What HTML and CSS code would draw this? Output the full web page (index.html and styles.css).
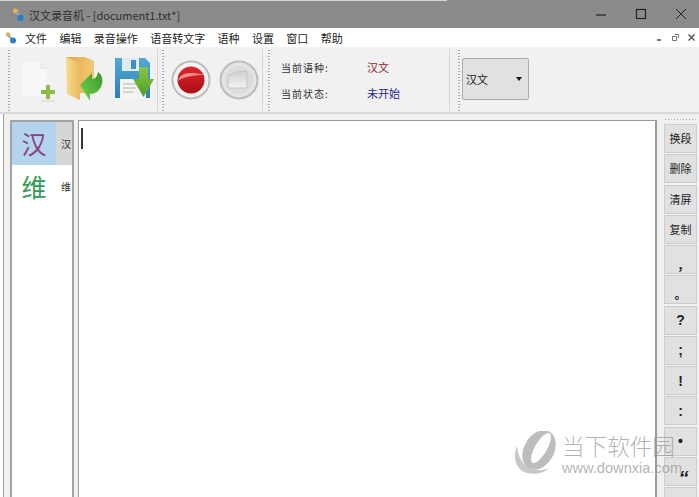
FILE: index.html
```html
<!DOCTYPE html>
<html lang="zh">
<head>
<meta charset="utf-8">
<title>汉文录音机</title>
<link rel="stylesheet" href="styles.css">
</head>
<body>
<div class="app">
  <header class="titlebar">
    <svg class="app-icon" width="13" height="14" viewBox="0 0 13 14"><circle cx="3.5" cy="3" r="2.5" fill="#e8b35a"/><path d="M4 4l5 5" stroke="#9aa7b5" stroke-width="2"/><circle cx="8.5" cy="10" r="3.2" fill="#2f7fc4"/></svg>
    <span class="title-text">汉文录音机 - [document1.txt*]</span>
    <div class="win-controls">
      <svg width="12" height="12" viewBox="0 0 12 12"><path d="M1 7h10" stroke="#222" stroke-width="1.2"/></svg>
      <svg width="12" height="12" viewBox="0 0 12 12"><rect x="1.5" y="1.5" width="9" height="9" fill="none" stroke="#222" stroke-width="1.2"/></svg>
      <svg width="12" height="12" viewBox="0 0 12 12"><path d="M1 1l10 10M11 1L1 11" stroke="#222" stroke-width="1"/></svg>
    </div>
  </header>

  <nav class="menubar">
    <svg class="menu-icon" width="13" height="14" viewBox="0 0 13 14"><circle cx="3" cy="3.5" r="2.3" fill="#e8b35a"/><path d="M3 4l5 5" stroke="#9aa7b5" stroke-width="2"/><circle cx="8" cy="9.5" r="3" fill="#2f7fc4"/></svg>
    <ul class="menu-list">
      <li>文件</li><li>编辑</li><li>录音操作</li><li>语音转文字</li><li>语种</li><li>设置</li><li>窗口</li><li>帮助</li>
    </ul>
    <div class="mdi-controls">
      <svg width="9" height="9" viewBox="0 0 9 9"><path d="M2 7h4" stroke="#555" stroke-width="1.6"/></svg>
      <svg width="9" height="9" viewBox="0 0 9 9"><path d="M3.5 1.5h4v3.5M1.500 3.5h4v4h-4z" fill="none" stroke="#777"/></svg>
      <svg width="9" height="9" viewBox="0 0 9 9"><path d="M1.5 1.5l6 6M7.5 1.5l-6 6" stroke="#555" stroke-width="1.4"/></svg>
    </div>
  </nav>

  <section class="toolbar">
    <div class="tool-group group-file">
      <svg class="tool-icon" width="36" height="44" viewBox="0 0 36 44">
        <path d="M1 4h17l7 7v27H1z" fill="#f8f8f8"/>
        <path d="M18 4l7 7h-7z" fill="#ececec"/>
        <path d="M26 27v14M19 34h14" stroke="#8dbb45" stroke-width="4"/>
        <path d="M19 43h14" stroke="#d8d8d8"/>
      </svg>
      <svg class="tool-icon" width="37" height="43" viewBox="0 0 37 43">
        <defs>
          <linearGradient id="fo" x1="0" y1="0" x2="1" y2="0"><stop offset="0" stop-color="#f7dc8e"/><stop offset="1" stop-color="#e9b95a"/></linearGradient>
          <linearGradient id="fb" x1="0" y1="0" x2="1" y2="0"><stop offset="0" stop-color="#e2a54a"/><stop offset="1" stop-color="#f3c976"/></linearGradient>
          <linearGradient id="ar" x1="0" y1="1" x2="1" y2="0"><stop offset="0" stop-color="#7fd24e"/><stop offset="1" stop-color="#2f9a2a"/></linearGradient>
        </defs>
        <path d="M0 0h19l9 4v32H12z" fill="url(#fb)"/>
        <path d="M0 0l14 6v37L1 37z" fill="url(#fo)"/>
        <path d="M14 28L26 16v6c3 0 5-2 6-7 4 3 5 7 4 12-2 7-7 10-12 10v7z" fill="url(#ar)"/>
      </svg>
      <svg class="tool-icon" width="40" height="41" viewBox="0 0 40 41">
        <defs>
          <linearGradient id="sv" x1="0" y1="0" x2="0" y2="1"><stop offset="0" stop-color="#55a6d8"/><stop offset="1" stop-color="#2d7fb8"/></linearGradient>
          <linearGradient id="sa" x1="0" y1="0" x2="0" y2="1"><stop offset="0" stop-color="#8cc63f"/><stop offset="1" stop-color="#4a9e25"/></linearGradient>
        </defs>
        <path d="M1 0h30l5 5v35H1z" fill="url(#sv)"/>
        <rect x="8" y="0" width="17" height="13" fill="#dfeaf2"/>
        <rect x="17" y="2" width="5" height="9" fill="#3f8fc4"/>
        <rect x="6" y="21" width="26" height="19" fill="#f4f4f4"/>
        <path d="M9 26h14M9 30h13M9 34h11" stroke="#b0b0b0"/>
        <path d="M25 9h9v12h6L29.500 39 19 21h6z" fill="url(#sa)"/>
      </svg>
    </div>
    <div class="tool-group group-record">
      <svg class="tool-icon" width="40" height="40" viewBox="0 0 40 40">
        <defs>
          <linearGradient id="rec" x1="0" y1="0" x2="0" y2="1"><stop offset="0" stop-color="#e0252b"/><stop offset="1" stop-color="#a80f16"/></linearGradient>
          <linearGradient id="stp" x1="0" y1="0" x2="0" y2="1"><stop offset="0" stop-color="#cfcfcf"/><stop offset="1" stop-color="#f2f2f2"/></linearGradient>
        </defs>
        <circle cx="20" cy="20" r="18.500" fill="#f4f4f4" stroke="#bcbcbc" stroke-width="2"/>
        <circle cx="20" cy="20" r="13.500" fill="url(#rec)"/>
        <path d="M6.800 21C9 13 18 11 33 15c-8 0-19 1-26.200 6z" fill="#f28a8a"/>
      </svg>
      <svg class="tool-icon" width="40" height="40" viewBox="0 0 40 40">
        <circle cx="20" cy="20" r="18.500" fill="#e4e4e4" stroke="#bcbcbc" stroke-width="2"/>
        <circle cx="20" cy="20" r="14" fill="#dcdcdc"/>
        <path d="M9 16c4-3 12-5 19-5v17H9z" fill="url(#stp)" stroke="#c4c4c4"/>
      </svg>
    </div>
    <div class="tool-group group-status">
      <div class="status-row"><span class="status-label">当前语种:</span><span class="status-value lang">汉文</span></div>
      <div class="status-row"><span class="status-label">当前状态:</span><span class="status-value state">未开始</span></div>
    </div>
    <div class="tool-group group-combo">
      <div class="combo"><span>汉文</span><i class="caret"></i></div>
    </div>
  </section>

  <main class="workspace">
    <aside class="langs">
      <div class="lang-item active"><span class="lang-glyph han">汉</span><span class="lang-name">汉</span></div>
      <div class="lang-item"><span class="lang-glyph wei">维</span><span class="lang-name">维</span></div>
    </aside>
    <div class="editor"><i class="cursor"></i></div>
    <aside class="quick">
      <div class="quick-grip"></div>
      <button class="q">换段</button>
      <button class="q">删除</button>
      <button class="q">清屏</button>
      <button class="q">复制</button>
      <button class="q punct">,</button>
      <button class="q punct">。</button>
      <button class="q sym">?</button>
      <button class="q sym">;</button>
      <button class="q sym">!</button>
      <button class="q sym">:</button>
      <button class="q sym">•</button>
      <button class="q sym quote">“</button>
      <button class="q sym"></button>
    </aside>
  </main>

  <div class="watermark">
    <svg class="wm-logo" width="44" height="43" viewBox="0 0 44 43">
      <ellipse cx="25" cy="19" rx="15" ry="21" transform="rotate(30 25 19)" fill="#bdbdbd"/>
      <ellipse cx="27" cy="17" rx="6" ry="17" transform="rotate(30 27 17)" fill="#fff"/>
      <path d="M3 15C-2 26 2 39 13 42c9 2 17 0 23-5-10 4-19 2-25-3-4-4-7-10-8-19z" fill="#c8c8c8"/>
    </svg>
    <div class="wm-text">
      <span class="wm-cn">当下软件园</span>
      <span class="wm-url">www.downxia.com</span>
    </div>
  </div>
</div>
</body>
</html>
```

FILE: styles.css
```css
* { box-sizing: border-box; }
html, body { margin: 0; padding: 0; }
body { font-family: "Noto Sans CJK SC", "Liberation Sans", sans-serif; background: #fff; }

.app {
  position: relative;
  width: 699px;
  height: 497px;
  overflow: hidden;
  display: flex;
  flex-direction: column;
}

/* title bar */
.titlebar {
  height: 28px;
  flex: none;
  background: #8b8b8b;
  border-top: 1px solid #8b8b8b;
  border-image: linear-gradient(to right, #d4d4d4 447px, #8b8b8b 447px) 1;
  display: flex;
  align-items: center;
  padding-left: 12px;
  font-size: 11px;
}
.app-icon { margin-right: 4px; }
.title-text { color: #2e2e2e; }
.win-controls {
  margin-left: auto;
  display: flex;
  gap: 28px;
  padding-right: 12px;
  margin-top: -1px;
}

/* menu */
.menubar {
  height: 19px;
  flex: none;
  background: #fff;
  display: flex;
  align-items: center;
  padding-left: 5px;
  font-size: 11px;
  color: #222;
}
.menu-list {
  list-style: none;
  margin: 0 0 0 7px;
  padding: 0;
  display: flex;
  gap: 12.4px;
}
.mdi-controls {
  margin-left: auto;
  display: flex;
  gap: 7px;
  padding-right: 3px;
}

/* toolbar */
.toolbar {
  height: 67px;
  flex: none;
  background: #f1f1f1;
  border-bottom: 2px solid #d9d9d9;
  display: flex;
  padding-top: 2px;
  padding-bottom: 2px;
}
.tool-group {
  display: flex;
  align-items: center;
  height: 62px;
  border-right: 1px solid #d4d4d4;
  background-image: radial-gradient(circle, #a9a9a9 0.7px, transparent 0.9px);
  background-size: 2px 3px;
  background-repeat: repeat-y;
  background-position: 1px 0;
}
.group-file { margin-left: 7px; width: 151px; padding-left: 15px; gap: 7px; }
.group-file .tool-icon:nth-child(2) { margin-left: 1px; margin-top: -3px; }
.group-file .tool-icon:nth-child(3) { margin-left: 4px; margin-top: -4px; }
.group-record { width: 102px; margin-left: 3px; padding-left: 10px; gap: 8px; }
.group-status {
  width: 183px;
  margin-left: 4px;
  padding-left: 14px;
  flex-direction: column;
  align-items: flex-start;
  justify-content: center;
  gap: 9px;
  font-size: 10px;
}
.status-row { display: flex; line-height: 17px; }
.status-label { width: 86px; letter-spacing: 1px; color: #333; }
.status-value { font-size: 11px; }
.lang { color: #93252f; }
.state { color: #1f1f8f; }
.group-combo { border: none; margin-left: 7px; padding-left: 5px; }
.combo {
  width: 67px;
  height: 42px;
  background: #e1e1e1;
  border: 1px solid #adadad;
  border-radius: 2px;
  display: flex;
  align-items: center;
  justify-content: space-between;
  padding: 0 6px 0 3px;
  font-size: 11px;
  color: #222;
  margin-top: -2px;
}
.caret {
  width: 0;
  height: 0;
  border-left: 3.5px solid transparent;
  border-right: 3.5px solid transparent;
  border-top: 4px solid #111;
}

/* workspace */
.workspace {
  flex: 1;
  min-height: 0;
  display: flex;
  background: #f0f0f0;
  border-left: 1px solid #9f9f9f;
  margin-left: 3px;
  padding-top: 6px;
  padding-left: 6px;
  gap: 4px;
  position: relative;
}
.langs {
  width: 64px;
  flex: none;
  background: #fff;
  border: 2px solid #a3a3a3;
  height: 500px;
  overflow: hidden;
}
.lang-item {
  height: 43px;
  display: flex;
  align-items: center;
}
.lang-item.active { background: #d6d6d6; }
.lang-glyph {
  width: 44px;
  height: 43px;
  flex: none;
  text-align: center;
  font-size: 25px;
  line-height: 43px;
}
.lang-item.active .lang-glyph { background: #b3d3ef; }
.han { color: #8c3f7c; }
.wei { color: #319a55; }
.lang-name {
  font-size: 10px;
  margin-left: 5px;
  white-space: nowrap;
  color: #333;
}
.editor {
  width: 579px;
  flex: none;
  height: 500px;
  background: #fff;
  border-style: solid;
  border-width: 1px 2px 0 1px;
  border-color: #9b9b9b;
  padding: 7px 2px;
}
.cursor { display: block; width: 1.5px; height: 21px; background: #333; }
.quick {
  flex: none;
  width: 35px;
  margin-left: 3px;
  margin-top: -2px;
  display: flex;
  flex-direction: column;
}
.quick-grip {
  height: 3px;
  flex: none;
  width: 34px;
  margin-bottom: 3px;
  background-image: radial-gradient(circle, #a9a9a9 0.7px, transparent 0.9px);
  background-size: 3px 3px;
}
.q {
  flex: none;
  width: 33px;
  height: 29px;
  margin: 0 0 1.25px 0;
  padding: 0;
  background: #e1e1e1;
  border: 1px solid #cdcdcd;
  font-family: inherit;
  font-size: 11px;
  color: #222;
  line-height: 1;
}
.punct { font-size: 12px; font-weight: 700; padding-top: 8px; }
.sym { font-size: 14px; font-weight: 700; font-family: "Liberation Sans", sans-serif; }
.quote { font-size: 20px; font-style: italic; padding-top: 10px; padding-left: 6px; }

/* watermark */
.watermark {
  position: absolute;
  left: 514px;
  top: 431px;
  display: flex;
  gap: 4px;
  pointer-events: none;
}
.wm-text { display: flex; flex-direction: column; }
.wm-cn {
  font-size: 22.6px;
  line-height: 29px;
  font-weight: 300;
  color: rgba(150,150,150,.72);
}
.wm-url {
  font-family: "Liberation Sans", sans-serif;
  font-size: 14.6px;
  line-height: 17px;
  color: rgba(150,150,150,.72);
  white-space: nowrap;
}
```
